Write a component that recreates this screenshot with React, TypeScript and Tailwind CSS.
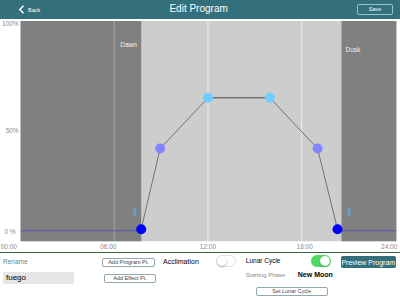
import React from 'react'

const points: [number, number, string][] = [
  [141, 230, '#0000ff'],
  [160, 149, '#8484ff'],
  [208, 98, '#6fcdff'],
  [270, 98, '#6fcdff'],
  [318, 149, '#8484ff'],
  [338, 230, '#0000ff'],
]

function Toggle({ on }: { on?: boolean }) {
  return (
    <div
      className={
        on
          ? 'flex h-[12px] w-[20px] items-center justify-end rounded-full bg-[#4cd964] p-[1px]'
          : 'flex h-[12px] w-[20px] items-center justify-start rounded-full border border-[#e2e2e2] bg-white'
      }
    >
      <div className="h-[10px] w-[10px] rounded-full bg-white shadow-[0_1px_2px_rgba(0,0,0,0.3)]" />
    </div>
  )
}

function SmallButton({ label, className }: { label: string; className?: string }) {
  return (
    <div
      className={
        'flex h-[9px] items-center justify-center rounded-[2px] border border-[#8fa9ad] text-[5.5px] leading-none text-[#444] ' +
        (className ?? '')
      }
    >
      {label}
    </div>
  )
}

function Chart() {
  return (
    <svg width="400" height="234" viewBox="0 19 400 234" className="block">
      <rect x="20" y="21" width="377" height="221" fill="#cdcdcd" />
      <rect x="20" y="21" width="121" height="221" fill="#808080" />
      <rect x="342" y="21" width="55" height="221" fill="#808080" />
      <line x1="114" y1="21" x2="114" y2="242" stroke="#a8a8a8" strokeWidth="1" />
      <line x1="208" y1="21" x2="208" y2="242" stroke="#ececec" strokeWidth="1" />
      <line x1="302" y1="21" x2="302" y2="242" stroke="#ececec" strokeWidth="1" />
      <text x="120" y="47" fontSize="6.5" fill="#f2f2f2" fontFamily="Liberation Sans, sans-serif">Dawn</text>
      <text x="346" y="52" fontSize="6.5" fill="#f2f2f2" fontFamily="Liberation Sans, sans-serif">Dusk</text>

      <text x="18" y="26" fontSize="6.5" fill="#8a8a8a" textAnchor="end" fontFamily="Liberation Sans, sans-serif">100%</text>
      <text x="18" y="133" fontSize="6.5" fill="#8a8a8a" textAnchor="end" fontFamily="Liberation Sans, sans-serif">50%</text>
      <text x="15" y="235" fontSize="6.5" fill="#8a8a8a" textAnchor="end" fontFamily="Liberation Sans, sans-serif">0 %</text>

      <line x1="20" y1="231.5" x2="141" y2="231.5" stroke="#5555b5" strokeWidth="1" />
      <line x1="338" y1="231.5" x2="397" y2="231.5" stroke="#5555b5" strokeWidth="1" />

      <rect x="133" y="208" width="3" height="9" rx="1.5" fill="#5aa8d8" opacity="0.8" />
      <rect x="348" y="208" width="3" height="9" rx="1.5" fill="#5aa8d8" opacity="0.8" />

      <polyline
        points={points.map(([x, y]) => `${x},${y}`).join(' ')}
        fill="none"
        stroke="#5a5a5a"
        strokeWidth="0.8"
      />
      <line x1="208" y1="98" x2="270" y2="98" stroke="#6a6a6a" strokeWidth="1.2" />
      {points.map(([x, y, c], i) => (
        <circle key={i} cx={x} cy={y} r="5" fill={c} />
      ))}

      {[
        ['00:00', 0, 'start'],
        ['06:00', 108, 'middle'],
        ['12:00', 208, 'middle'],
        ['18:00', 305, 'middle'],
        ['24:00', 398, 'end'],
      ].map(([t, x, a]) => (
        <text
          key={t as string}
          x={x as number}
          y="250"
          fontSize="6.5"
          fill="#8a8a8a"
          textAnchor={a as 'start' | 'middle' | 'end'}
          fontFamily="Liberation Sans, sans-serif"
        >
          {t}
        </text>
      ))}
    </svg>
  )
}

export default function App() {
  return (
    <div className="flex h-[300px] w-[400px] flex-col overflow-hidden bg-white font-['Liberation_Sans',sans-serif]">
      <div className="relative flex h-[19px] items-center bg-[#34707c] text-white">
        <div className="flex items-center pl-[18px]">
          <svg width="7" height="9" viewBox="0 0 7 9">
            <path d="M5.5 0.8 L1.8 4.5 L5.5 8.2" fill="none" stroke="white" strokeWidth="1.5" />
          </svg>
          <span className="ml-[3px] mt-[3px] text-[5.5px] leading-none">Back</span>
        </div>
        <div className="flex-1 text-center text-[10px] leading-none">Edit Program</div>
        <div className="mr-[7px] flex h-[11px] w-[36px] items-center justify-center rounded-[2px] border border-[#9cc0c6] text-[5.5px] leading-none">
          Save
        </div>
      </div>
      <Chart />
      <div className="h-[1px] bg-[#2f6b3e]" />
      <div className="flex h-[47px] items-start">
        <div className="ml-[3px] flex w-[99px] flex-col">
          <span className="mt-[6px] text-[6.5px] leading-none text-[#5a8a90]">Rename</span>
          <div className="mt-[6px] flex h-[12px] w-[71px] items-center rounded-[2px] bg-[#e6e6e6] pl-[3px] text-[8px] leading-none text-black">
            fuego
          </div>
        </div>
        <div className="flex flex-col">
          <SmallButton label="Add Program Pt." className="mt-[5px] w-[53px]" />
          <SmallButton label="Add Effect Pt." className="ml-[2px] mt-[7px] w-[52px]" />
        </div>
        <div className="ml-[7px] flex items-start">
          <span className="mt-[5px] text-[7px] leading-none text-black">Acclimation</span>
          <div className="ml-[17px] mt-[2px]">
            <Toggle />
          </div>
        </div>
        <div className="ml-[10px] flex flex-col">
          <div className="flex items-start">
            <span className="mt-[5px] w-[65px] text-[6.5px] leading-none text-black">Lunar Cycle</span>
            <div className="mt-[2px]">
              <Toggle on />
            </div>
          </div>
          <div className="mt-[4px] flex items-center">
            <span className="w-[52px] text-[6px] leading-none text-[#8a8a8a]">Starting Phase</span>
            <span className="text-[7px] font-bold leading-none text-black">New Moon</span>
          </div>
          <SmallButton label="Set Lunar Cycle" className="ml-[10px] mt-[9px] w-[72px]" />
        </div>
        <div className="ml-[8px] mt-[3px] flex h-[12px] w-[55px] items-center justify-center rounded-[2px] bg-[#34707c] text-[7px] leading-none text-white">
          Preview Program
        </div>
      </div>
    </div>
  )
}
